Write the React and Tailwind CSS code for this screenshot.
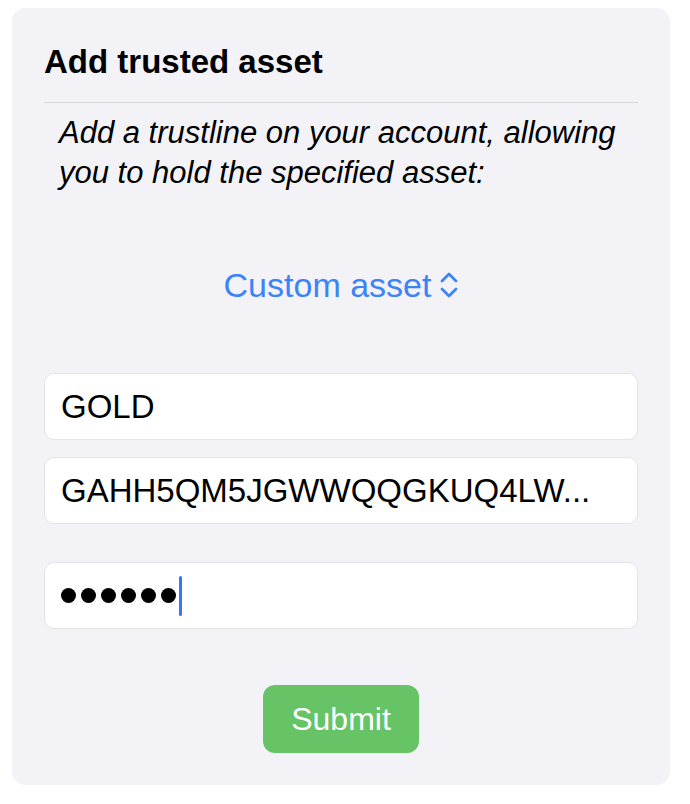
import React from 'react';

const fieldClass =
  'w-full h-[67px] px-[16px] bg-white border border-[#e3e3e8] rounded-[10px] text-[33px] text-black outline-none';

const App = () => {
  return (
    <div className="min-h-screen bg-white pt-[8px] px-[12px] font-['Liberation_Sans',Arial,sans-serif]">
      <div className="w-[658px] h-[777px] bg-[#f2f2f7] rounded-[14px] pt-[37px] pl-[32px] pr-[32px] pb-[32px] flex flex-col">
        <h2 className="text-[33px] leading-[33px] font-bold text-black pb-[24px] border-b border-[#d6d6db]">
          Add trusted asset
        </h2>

        <p className="mt-[10px] pl-[15px] text-[31px] leading-[40px] italic text-black">
          Add a trustline on your account, allowing
          <br />
          you to hold the specified asset:
        </p>

        {/* asset picker */}
        <button className="mt-[72px] self-center flex items-center gap-[9px] h-[40px] text-[34px] text-[#3a84f7]">
          Custom asset
          <svg width="18" height="28" viewBox="0 0 18 28" fill="none" stroke="currentColor" strokeWidth="2.8" strokeLinecap="round" strokeLinejoin="round">
            <path d="M2 10 L9 3 L16 10" />
            <path d="M2 18 L9 25 L16 18" />
          </svg>
        </button>

        <input className={`mt-[68px] ${fieldClass}`} defaultValue="GOLD" readOnly />
        <input className={`mt-[17px] ${fieldClass}`} defaultValue="GAHH5QM5JGWWQQGKUQ4LW..." readOnly />

        {/* password field, focused */}
        <div className={`mt-[38px] flex items-center ${fieldClass}`}>
          <div className="flex items-center gap-[5px]">
            {[0, 1, 2, 3, 4, 5].map((i) => (
              <span key={i} className="w-[15px] h-[15px] rounded-full bg-black" />
            ))}
          </div>
          <span className="ml-[3px] w-[3px] h-[40px] rounded-full bg-[#3478f6]" />
        </div>

        <button className="mt-[56px] self-center w-[156px] h-[68px] rounded-[12px] bg-[#66c466] text-white text-[32px]">
          Submit
        </button>
      </div>
    </div>
  );
};

export default App;
